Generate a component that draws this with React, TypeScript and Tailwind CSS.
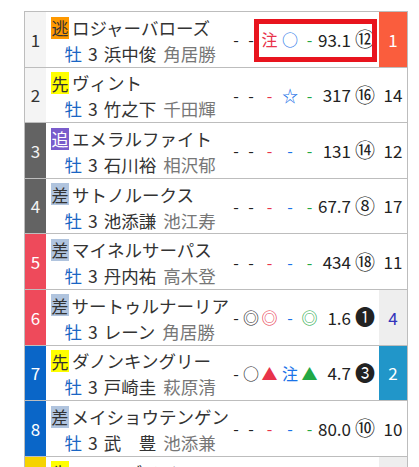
import React from "react";

type Horse = {
  no: number;
  frame: number;
  style: string;
  name: string;
  jockey: string;
  trainer: string;
  marks: string[];
  odds: string;
  pop: string;
  finish: string;
};

const HORSES: Horse[] = [
  { no: 1, frame: 1, style: "逃", name: "ロジャーバローズ", jockey: "浜中俊", trainer: "角居勝", marks: ["-", "-", "注", "○", "-"], odds: "93.1", pop: "⑫", finish: "1" },
  { no: 2, frame: 1, style: "先", name: "ヴィント", jockey: "竹之下", trainer: "千田輝", marks: ["-", "-", "-", "☆", "-"], odds: "317", pop: "⑯", finish: "14" },
  { no: 3, frame: 2, style: "追", name: "エメラルファイト", jockey: "石川裕", trainer: "相沢郁", marks: ["-", "-", "-", "-", "-"], odds: "131", pop: "⑭", finish: "12" },
  { no: 4, frame: 2, style: "差", name: "サトノルークス", jockey: "池添謙", trainer: "池江寿", marks: ["-", "-", "-", "-", "-"], odds: "67.7", pop: "⑧", finish: "17" },
  { no: 5, frame: 3, style: "差", name: "マイネルサーパス", jockey: "丹内祐", trainer: "高木登", marks: ["-", "-", "-", "-", "-"], odds: "434", pop: "⑱", finish: "11" },
  { no: 6, frame: 3, style: "差", name: "サートゥルナーリア", jockey: "レーン", trainer: "角居勝", marks: ["-", "◎", "◎", "-", "◎"], odds: "1.6", pop: "❶", finish: "4" },
  { no: 7, frame: 4, style: "先", name: "ダノンキングリー", jockey: "戸崎圭", trainer: "萩原清", marks: ["-", "○", "▲", "注", "▲"], odds: "4.7", pop: "❸", finish: "2" },
  { no: 8, frame: 4, style: "差", name: "メイショウテンゲン", jockey: "武　豊", trainer: "池添兼", marks: ["-", "-", "-", "-", "-"], odds: "80.0", pop: "⑩", finish: "10" },
  { no: 9, frame: 5, style: "先", name: "ニシノデイジー", jockey: "勝浦正", trainer: "高木登", marks: ["-", "-", "-", "-", "-"], odds: "40.9", pop: "⑨", finish: "5" },
];

const FRAME_CELL: Record<number, string> = {
  1: "bg-[#f4f4f4] text-[#333]",
  2: "bg-[#636363] text-[#f2f2f2]",
  3: "bg-[#ee4a5b] text-white",
  4: "bg-[#0a66c8] text-white",
  5: "bg-[#f5d300] text-[#333]",
};

const STYLE_BADGE: Record<string, string> = {
  逃: "bg-[#ff9900] text-[#333]",
  先: "bg-[#ffff00] text-[#333]",
  追: "bg-[#7a5ccc] text-white",
  差: "bg-[#b0c4de] text-[#333]",
};

const MARK_SLOTS = [
  "w-[14px] text-[#222]",
  "w-[16px] text-[#222]",
  "w-[21px] text-[#e8334a]",
  "w-[20px] text-[#1a73e8]",
  "w-[19px] text-[#22a845]",
];

function finishCell(finish: string) {
  if (finish === "1") return "bg-[#fa5d3d] text-white";
  if (finish === "2") return "bg-[#2196c9] text-white";
  if (finish === "4" || finish === "5") return "bg-[#eeeeee] text-[#3333bb]";
  return "bg-white text-[#222]";
}

function HorseRow({ horse }: { horse: Horse }) {
  return (
    <div className="relative flex h-[55.6px] shrink-0 border-b border-[#bdbdbd]">
      {/* Horse number */}
      <div className={`flex w-[21px] shrink-0 items-center justify-center text-[17px] ${FRAME_CELL[horse.frame]}`}>
        {horse.no}
      </div>

      {/* Name, sex/age, jockey, trainer */}
      <div className="flex w-[183px] shrink-0 flex-col pl-[5px] pt-[2.5px] whitespace-nowrap">
        <div className="flex h-[26px] items-center">
          <span className={`flex h-[22px] w-[18px] items-center justify-center text-[17px] leading-none ${STYLE_BADGE[horse.style]}`}>
            {horse.style}
          </span>
          <span className="ml-[3px] text-[17.5px] leading-none text-[#333]">{horse.name}</span>
        </div>
        <div className="ml-[13.5px] flex h-[26px] items-center text-[17.5px] leading-none">
          <span className="text-[#1a66c4]">牡</span>
          <span className="ml-[6px] text-[#333]">3</span>
          <span className="ml-[6px] text-[#333]">{horse.jockey}</span>
          <span className="ml-[7px] text-[#777]">{horse.trainer}</span>
        </div>
      </div>

      {/* Marks */}
      <div className="flex w-[90px] shrink-0 items-center text-[16px] leading-none">
        {horse.marks.map((m, i) => (
          <span key={i} className={`flex justify-center whitespace-nowrap ${MARK_SLOTS[i]}`}>
            {m}
          </span>
        ))}
      </div>

      {/* Odds */}
      <div className="flex w-[32px] shrink-0 items-center justify-end text-[17px] text-[#222]">
        {horse.odds}
      </div>

      {/* Popularity */}
      <div className="flex w-[28px] shrink-0 items-center justify-center text-[20px] leading-none text-[#222]">
        {horse.pop}
      </div>

      {/* Finish */}
      <div className={`flex w-[28px] shrink-0 items-center justify-center text-[17px] ${finishCell(horse.finish)}`}>
        {horse.finish}
      </div>

      {horse.no === 1 && (
        <div className="pointer-events-none absolute left-[229px] top-[7px] h-[43px] w-[123px] border-[5px] border-[#e8141e]" />
      )}
    </div>
  );
}

export default function App() {
  return (
    <div className="h-[467px] overflow-hidden bg-white font-['Noto_Sans_CJK_JP',sans-serif]">
      <div className="ml-[24px] mt-[11px] flex w-[384px] flex-col border-x border-t border-[#bdbdbd]">
        {HORSES.map((h) => (
          <HorseRow key={h.no} horse={h} />
        ))}
      </div>
    </div>
  );
}
